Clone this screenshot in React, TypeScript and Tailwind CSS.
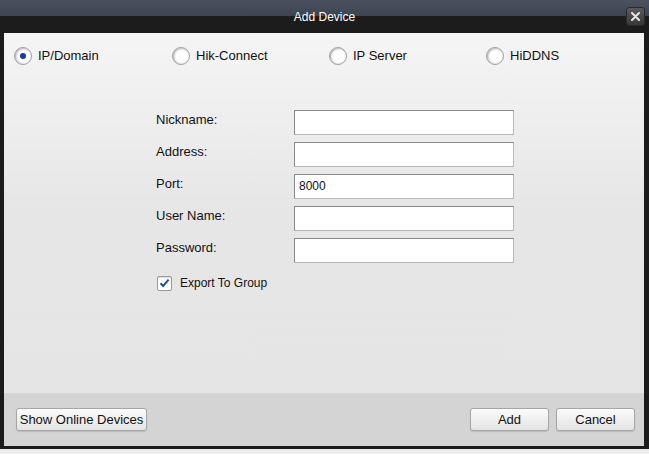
import React, { useState } from 'react';

const fields = [
  { label: 'Nickname:', value: '' },
  { label: 'Address:', value: '' },
  { label: 'Port:', value: '8000' },
  { label: 'User Name:', value: '' },
  { label: 'Password:', value: '' },
];

const modes = [
  { id: 'ip', label: 'IP/Domain', w: 'w-[158px]' },
  { id: 'hik', label: 'Hik-Connect', w: 'w-[157px]' },
  { id: 'server', label: 'IP Server', w: 'w-[157px]' },
  { id: 'ddns', label: 'HiDDNS', w: 'w-[100px]' },
];

const Radio = ({ checked }: { checked: boolean }) => (
  <span className="flex h-[18px] w-[18px] items-center justify-center rounded-full border border-[#a0a0a0] bg-[radial-gradient(circle_at_58%_42%,#ffffff_50%,#dcdcdc_100%)] shadow-[inset_1px_1px_2px_rgba(0,0,0,0.28)]">
    {checked && <span className="h-[6px] w-[6px] rounded-full bg-[#1a3aa0]" />}
  </span>
);

const Button = ({ children, className }: { children: React.ReactNode; className: string }) => (
  <button className={`h-[23px] rounded-[3px] border border-[#a6a6a6] bg-gradient-to-b from-[#fbfbfb] to-[#e4e4e4] text-[13px] text-[#111] shadow-[0_1px_1px_rgba(0,0,0,0.12)] ${className}`}>
    {children}
  </button>
);

export default function App() {
  const [mode, setMode] = useState('ip');

  return (
    <div className="h-[454px] w-[649px] overflow-hidden bg-[#ececec] font-['Liberation_Sans',Arial,sans-serif]">
      <div className="flex h-[449px] w-[649px] flex-col bg-[#1b1b1b]">
        {/* Title bar */}
        <div className="relative flex h-[33px] items-center justify-center bg-[linear-gradient(to_bottom,#4a5260_0%,#3d4452_48%,#1c1c1c_50%,#1c1c1c_100%)]">
          <span className="text-[12px] text-white">Add Device</span>
          <button className="absolute right-[4px] top-[7px] flex h-[19px] w-[19px] items-center justify-center rounded-[3px] border border-[#2a2a2a] bg-gradient-to-b from-[#5a5a5a] to-[#383838]">
            <svg width="9" height="9" viewBox="0 0 9 9">
              <path d="M1 1 L8 8 M8 1 L1 8" stroke="#e6e6e6" strokeWidth="2" strokeLinecap="round" />
            </svg>
          </button>
        </div>

        {/* Body */}
        <div className="ml-[4px] mr-[5px] flex flex-1 flex-col">
          <div className="flex flex-1 flex-col bg-gradient-to-b from-[#f5f5f5] via-[#e6e6e6] to-[#e5e5e5]">
            <div className="flex h-[46px] items-center pl-[10px]">
              {modes.map(m => (
                <label key={m.id} className={`flex cursor-pointer items-center gap-[6px] ${m.w}`} onClick={() => setMode(m.id)}>
                  <Radio checked={mode === m.id} />
                  <span className="text-[13px] text-[#111]">{m.label}</span>
                </label>
              ))}
            </div>

            <div className="ml-[152px] mt-[31px] flex flex-col gap-[8px]">
              {fields.map(f => (
                <div key={f.label} className="flex h-[24px] items-center">
                  <span className="-mt-[4px] w-[138px] text-[13px] text-[#111]">{f.label}</span>
                  <input
                    defaultValue={f.value}
                    type={f.label === 'Password:' ? 'password' : 'text'}
                    className="h-[25px] w-[220px] border border-[#b8b8b8] border-t-[#8a8a8a] border-l-[#8a8a8a] bg-white px-[4px] text-[12px] text-[#111] outline-none"
                  />
                </div>
              ))}
              <label className="mt-[4px] flex items-center gap-[8px] pl-[1px]">
                <span className="flex h-[15px] w-[15px] items-center justify-center rounded-[2px] border border-[#9a9a9a] bg-white shadow-[inset_0_1px_1px_rgba(0,0,0,0.15)]">
                  <svg width="11" height="10" viewBox="0 0 11 10">
                    <path d="M1.5 5.2 L4.2 8 L9.6 1.6" fill="none" stroke="#1f4fa8" strokeWidth="2" />
                  </svg>
                </span>
                <span className="text-[12px] text-[#111]">Export To Group</span>
              </label>
            </div>
          </div>

          {/* Footer */}
          <div className="flex h-[53px] items-center justify-between bg-[#d4d4d4] pl-[12px] pr-[9px]">
            <Button className="w-[131px]">Show Online Devices</Button>
            <div className="flex gap-[7px]">
              <Button className="w-[79px]">Add</Button>
              <Button className="w-[79px]">Cancel</Button>
            </div>
          </div>
        </div>
        <div className="h-[3px]" />
      </div>
    </div>
  );
}
